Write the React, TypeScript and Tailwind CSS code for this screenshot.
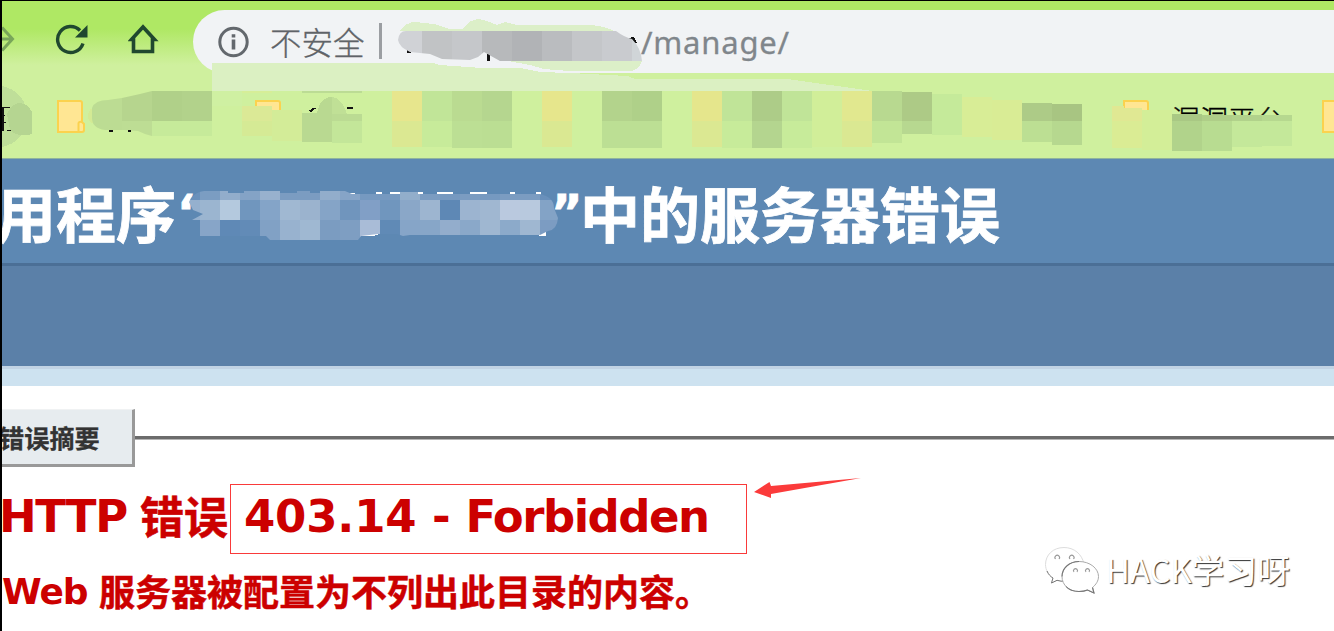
import React from "react";

type Block = [x: number, y: number, w: number, h: number, fill: string];

const bookmarkBlocks: Block[] = [
  [302, 91, 60, 2, "#bcdc94"],
  [242, 91, 30, 2, "#d6ee98"],
  [242, 106, 30, 15, "#dbe996"],
  [242, 121, 30, 15, "#d5ea95"],
  [272, 110, 30, 31, "#d3ec98"],
  [302, 113, 30, 29, "#b9d991"],
  [332, 114, 30, 7, "#bbdb93"],
  [332, 121, 30, 22, "#c3e699"],
  [392, 91, 30, 30, "#e7e68d"],
  [392, 121, 30, 26, "#dbe892"],
  [422, 91, 30, 30, "#c1e598"],
  [422, 121, 30, 26, "#c7eb9a"],
  [452, 91, 30, 30, "#badb91"],
  [452, 121, 30, 27, "#bcdf94"],
  [482, 91, 30, 30, "#b5d68f"],
  [482, 121, 30, 27, "#bbde93"],
  [542, 91, 30, 30, "#e6e68c"],
  [542, 121, 30, 26, "#dae892"],
  [602, 91, 30, 30, "#b3d38c"],
  [632, 91, 30, 30, "#afd089"],
  [602, 121, 60, 27, "#bcdf94"],
  [692, 91, 30, 30, "#e5e68c"],
  [692, 121, 30, 26, "#dbe892"],
  [722, 91, 30, 30, "#c0e498"],
  [722, 121, 30, 27, "#c7eb9a"],
  [752, 91, 30, 30, "#adcc88"],
  [752, 121, 30, 27, "#b4d58f"],
  [782, 91, 30, 30, "#c0e498"],
  [782, 121, 30, 27, "#c7eb9a"],
  [812, 91, 30, 56, "#d1ee99"],
  [842, 91, 30, 30, "#e1e88f"],
  [842, 121, 30, 26, "#dae892"],
  [872, 91, 30, 30, "#b8d990"],
  [872, 121, 30, 22, "#c2e596"],
  [902, 92, 30, 29, "#adca86"],
  [902, 121, 30, 13, "#b7d890"],
  [932, 94, 30, 41, "#c5ea9a"],
  [962, 97, 30, 40, "#d8ed96"],
  [992, 100, 30, 40, "#d9ec95"],
  [1022, 103, 30, 18, "#adcb87"],
  [1022, 121, 30, 21, "#bcdf93"],
  [1052, 104, 30, 17, "#a8c582"],
  [1052, 121, 30, 24, "#b6d88f"],
  [1112, 106, 12, 15, "#e0e893"],
  [1124, 108, 18, 13, "#e0e893"],
  [1112, 121, 30, 27, "#daec94"],
  [1142, 110, 30, 40, "#d3ee98"],
  [1172, 114, 30, 7, "#a9c884"],
  [1172, 121, 30, 30, "#b1d38b"],
  [1202, 115, 30, 6, "#afce88"],
  [1202, 121, 30, 30, "#b8dc91"],
  [1232, 115, 30, 6, "#b1d28b"],
  [1232, 121, 30, 26, "#c4e89a"],
  [1262, 115, 30, 6, "#b6d88f"],
  [1262, 121, 30, 25, "#c4e89a"],
];

const smudgeBlocks: Block[] = [
  [88, 90, 34, 50, "#bcdc93"],
  [122, 90, 30, 31, "#b6d58e"],
  [152, 90, 30, 31, "#b0d089"],
  [182, 90, 30, 31, "#b2d28b"],
  [122, 121, 30, 20, "#bddd94"],
  [152, 121, 60, 20, "#c6ea9a"],
];

const urlBlocks: Block[] = [
  [396, 31, 26, 30, "#d0d2d6"],
  [422, 31, 30, 30, "#c1c3c5"],
  [452, 31, 30, 30, "#c5c7ca"],
  [482, 31, 30, 30, "#b7b9bb"],
  [512, 31, 30, 30, "#b1b3b6"],
  [542, 31, 30, 30, "#babcbf"],
  [572, 31, 30, 30, "#c4c6c9"],
  [602, 31, 30, 30, "#c9cbcf"],
  [632, 31, 12, 30, "#d0d5d8"],
];

const titleRows: { y: number; h: number; colors: string[] }[] = [
  {
    y: 190,
    h: 10,
    colors: ["#6990bb", "#7b9dc2", "#92adcb", "#84a3c6", "#98b1ce", "#7b9cc1", "#7b9cc1", "#92adcb", "#86a4c7", "#7699c0", "#7699c0", "#92aecb", "#7b9cc1", "#7699c0", "#7b9cc1", "#7699c0", "#7b9cc1", "#7b9cc1", "#6990bb"],
  },
  {
    y: 200,
    h: 20,
    colors: ["#95b0ce", "#9bb5d0", "#b4c9de", "#7096be", "#84a4c8", "#a0b8d2", "#9bb3ce", "#85a4c7", "#7095bd", "#819fc6", "#7096be", "#8aa7c8", "#9db5d0", "#5e88b5", "#9cb4d0", "#a0b7d1", "#bac9df", "#b8c9de", "#83a3c6"],
  },
  {
    y: 220,
    h: 20,
    colors: ["#5d88b3", "#87a5c8", "#5f89b6", "#628bb7", "#81a1c5", "#98b2cf", "#9fb8d2", "#7b9cc1", "#7e9ec2", "#a9bcd7", "#608ab6", "#86a5c8", "#87a6c8", "#93adcc", "#8aa8c9", "#9fb7d1", "#8caaca", "#9fb7d1", "#7c9cc2"],
  },
];

function Blocks({ items }: { items: Block[] }) {
  return (
    <>
      {items.map(([x, y, w, h, fill]) => (
        <rect key={`${x}-${y}`} x={x} y={y} width={w} height={h} fill={fill} />
      ))}
    </>
  );
}

function HeaderMosaic() {
  return (
    <svg className="pointer-events-none absolute top-0 left-0" width="1334" height="158" viewBox="0 0 1334 158" shapeRendering="crispEdges">
      <defs>
        <clipPath id="url-clip">
          <path d="M398 40 Q399 31 406 31 H616 Q624 37 632 39 Q641 48 642 61 H500 L491 56 L484 52 L478 57 L470 60 L442 59 L430 54 L410 52 Q399 47 398 40Z" />
        </clipPath>
        <clipPath id="smudge-clip">
          <path d="M92 108 Q95 100 108 100 L122 98 L140 94 L152 91 H212 V136 H152 L145 134 L138 131 L124 130 H105 Q92 128 92 118Z" />
        </clipPath>
      </defs>
      <path d="M212 63 H433 L440 65 L482 68 H520 L540 72 L570 73 L628 76 L635 79 H787 L830 85 L873 91 L590 91 H242 V106 H209 L212 100Z" fill="#dbf0c2" />
      <rect x="208" y="91" width="34" height="15" fill="#cff0a2" />
      <path d="M400 31 Q406 22 415 22 L434 24 L450 29 L463 29 Q470 19 479 19 L487 21 L497 25 L505 22 L517 25 H592 Q608 27 618 33Z" fill="#dcefc8" />
      <path d="M508 61 H642 Q639 71 629 71 H569 L544 69 L530 65Z" fill="#dcefc8" />
      <g fill="#111">
        <path d="M627 38 L634 37 L637 43 L630 42Z" />
        <rect x="407" y="50" width="4" height="3" />
        <rect x="480" y="51" width="2" height="2" />
        <rect x="487" y="54" width="3" height="7" />
      </g>
      <g clipPath="url(#url-clip)">
        <Blocks items={urlBlocks} />
      </g>
      <path d="M2 86 A31 31 0 0 1 2 147Z" fill="#bfdf99" />
      <path d="M7 114 Q12 103 20 103 Q28 104 32 112 V134 Q18 138 10 130Z" fill="#b5d591" />
      <path d="M2 107.500h8M2 115.500h3M2 122.500h4M7 130.500h4" stroke="#111" strokeWidth="1.500" />
      <path d="M3 108V131" stroke="#111" strokeWidth="1.500" />
      <ellipse cx="92" cy="116" rx="4" ry="7" fill="#d3ea94" />
      <g clipPath="url(#smudge-clip)">
        <Blocks items={smudgeBlocks} />
      </g>
      <path d="M109 131h4M128 131h3M347 108h6" stroke="#111" strokeWidth="2" />
      <path d="M308 111 L314 107.500 H317 L311 112Z" fill="#111" />
      <path d="M317 113 Q320 97 332 97 V114Z" fill="#b9d991" />
      <path d="M332 97 Q342 98 347 114 H332Z" fill="#c0e096" />
      <Blocks items={bookmarkBlocks} />
    </svg>
  );
}

function TitleMosaic() {
  return (
    <svg className="pointer-events-none absolute top-[159px] left-0" width="600" height="100" viewBox="0 159 600 100" shapeRendering="crispEdges">
      <defs>
        <clipPath id="title-clip">
          <path d="M191 198 Q196 192 204 191 H228 V193 H244 V191 H280 V193 H297 V191 H310 V193 H320 V191 H345 L352 194 H365 L370 194 H400 V192 H418 V194 H540 Q554 197 554 208 L558 218 Q557 230 548 231 L540 235 H410 L403 236 L397 234 H378 L361 236 L358 240 H270 L266 236 H200 V220 H192 L203 214 L193 210 L189 202Z" />
        </clipPath>
      </defs>
      <path d="M332 193H355V195H332ZM376 192H382V195H376ZM390 192H423V194H390ZM437 192H453V194H437ZM470 192H487V194H470ZM510 192H515V195H510ZM536 192H541V195H536Z" fill="#fff" />
      <path d="M361 234 H380 L373 236 H361ZM539 235 L546 231 V236 H539Z" fill="#fff" />
      <g clipPath="url(#title-clip)">
        {titleRows.map(({ y, h, colors }) =>
          colors.map((fill, i) => <rect key={`${y}-${i}`} x={180 + i * 20} y={y} width={20} height={h} fill={fill} />),
        )}
      </g>
    </svg>
  );
}

function Folder({ className }: { className: string }) {
  return (
    <svg className={className} width="28" height="33" viewBox="0 0 28 33">
      <path d="M1 1H23Q25 1 25 3V22L27 24V30Q27 32 25 32H1Z" fill="#ffe693" stroke="#fbd24e" strokeWidth="2" />
      <path d="M21.500 32V23Q22 21.500 25 22" fill="none" stroke="#fbd24e" strokeWidth="2" />
    </svg>
  );
}

function Toolbar() {
  return (
    <div className="flex h-[72px] items-start pt-[9px]">
      <svg className="mt-[14px] shrink-0" width="13" height="30" viewBox="0 0 13 30">
        <path d="M0 15H10M0 3.500L10.500 15L0 26.500" fill="none" stroke="#79a65a" strokeWidth="3" />
      </svg>
      <svg className="mt-[13px] ml-[40px] shrink-0" width="36" height="34" viewBox="0 0 36 34">
        <path d="M28 20.500A13 13 0 1 1 25 7.500" fill="none" stroke="#20482f" strokeWidth="3.400" />
        <path d="M32.500 2V14.500H20Z" fill="#20482f" />
      </svg>
      <svg className="mt-[14px] ml-[37px] shrink-0" width="32" height="32" viewBox="0 0 32 32">
        <path d="M3.500 15.500L15 3L26.500 15.500H24.500V27.500H5.500V15.500Z" fill="none" stroke="#20482f" strokeWidth="3.600" />
      </svg>
      <div className="ml-[33px] flex h-[63px] flex-1 items-start rounded-l-full bg-[#f1f3f5]">
        <svg className="mt-4 ml-[25px] shrink-0" width="32" height="32" viewBox="0 0 32 32">
          <circle cx="15.500" cy="16" r="13.700" fill="none" stroke="#63686d" strokeWidth="3" />
          <path d="M15.500 13.500V23.500M15.500 8.200V11.500" stroke="#63686d" strokeWidth="3.600" />
        </svg>
        <span className="mt-[15px] ml-[20px] w-[96px] shrink-0 whitespace-nowrap font-['Noto_Sans_CJK_SC',sans-serif] text-[31.500px] leading-[32px] font-light text-[#5f6368] [-webkit-text-stroke:0.3px_#5f6368]">不安全</span>
        <span className="mt-[13px] ml-[13px] h-9 w-[3px] shrink-0 bg-[#9b9ea2]" />
        <span className="mt-[12px] ml-[259px] whitespace-nowrap font-['Noto_Sans',sans-serif] text-[31px] leading-[40px] tracking-[0.800px] text-[#80868b] [-webkit-text-stroke:0.3px_#80868b]">/manage/</span>
      </div>
    </div>
  );
}

function Bookmarks() {
  return (
    <div className="flex items-start pt-[27px]">
      <Folder className="ml-[55px] shrink-0" />
      <Folder className="ml-[170px] shrink-0" />
      <Folder className="ml-[840px] shrink-0" />
      <span className="mt-[3px] ml-[21px] w-[116px] shrink-0 whitespace-nowrap font-['Noto_Sans_CJK_SC',sans-serif] text-[28px] leading-[32px] font-light text-black [-webkit-text-stroke:0.4px_#000]">漏洞平台</span>
      <Folder className="ml-[34px] shrink-0" />
    </div>
  );
}

function Annotation() {
  return (
    <>
      <div className="absolute top-[484px] left-[230px] h-[70px] w-[517px] border border-[#f93a3a]" />
      <svg className="absolute top-[474px] left-[750px]" width="114" height="28" viewBox="750 474 114 28">
        <path d="M754 492L769.500 482L771 486L861 478L771 494V498Z" fill="#fb3b3b" />
      </svg>
    </>
  );
}

function Watermark() {
  return (
    <div className="absolute top-[544px] left-[1044px] flex items-start">
      <svg width="60" height="52" viewBox="0 0 60 52">
        <g fill="#fff" strokeWidth="1">
          <path d="M20 3.500C9 3.500 1.500 11 1.500 20.500C1.500 26 4.500 31 9 34L7.500 39L13 36.300Q17 37.500 22 37.200L40 20C38 10 30 3.500 20 3.500Z" stroke="#ddd" />
          <path d="M3 27C4.500 30.500 6.500 32.500 9 34L7.500 39L13 36.300Q17 37.500 21 37.200" stroke="#777" />
          <path d="M35 17.500C25 17.500 18 24.500 18 32.500C18 41 25 47.500 35 47.500Q40 47.500 43.500 46L50 49L48.500 43.500C52 40.500 54.500 37 54.500 32.500C54.500 24.500 46 17.500 35 17.500Z" stroke="#aaa" />
        </g>
        <g fill="none" stroke="#777" strokeWidth="1.100">
          <path d="M18 32.500C18 24.500 25 17.500 35 17.500M22 42.500C25 46 30 47.500 35 47.500Q40 47.500 43.500 46L50 49L48.500 43.500" />
          <path d="M11.500 15a2.300 2.300 0 1 1 3.500 0M26 15a2.300 2.300 0 1 1 3.500 0M30 28a2 2 0 1 1 3 0M42 28a2 2 0 1 1 3 0" stroke="#999" />
        </g>
      </svg>
      <span className="mt-[5px] ml-[2px] whitespace-nowrap font-['Noto_Sans_CJK_SC',sans-serif] text-[32.800px] leading-[40px] text-white [text-shadow:1px_1px_1px_#333]">HACK学习呀</span>
    </div>
  );
}

export default function App() {
  return (
    <div className="relative h-[631px] w-[1334px] overflow-hidden border-t border-l-2 border-black bg-white">
      <div className="h-[157px] bg-[linear-gradient(to_bottom,#afe864_0px,#afe864_28px,#cff09e_64px,#cff09e_157px)]">
        <Toolbar />
        <Bookmarks />
      </div>

      <div className="flex h-[108px] items-start border-t border-b-[3px] border-t-[#8fb39e] border-b-[#4b6f96] bg-[#5d88b3] pt-[18px] whitespace-nowrap text-white [-webkit-text-stroke:0.8px_#fff]">
        <span className="ml-[-6px] w-[181px] shrink-0 font-['Noto_Sans_CJK_SC',sans-serif] text-[60px] leading-[70px] font-bold">用程序</span>
        <span className="w-[374px] shrink-0 font-['DejaVu_Sans',sans-serif] text-[48px] leading-[70px] font-bold">‘</span>
        <span className="w-[29px] shrink-0 font-['DejaVu_Sans',sans-serif] text-[48px] leading-[70px] font-bold">”</span>
        <span className="shrink-0 font-['Noto_Sans_CJK_SC',sans-serif] text-[60px] leading-[70px] font-bold">中的服务器错误</span>
      </div>
      <div className="h-[100px] bg-[#5b80a8]" />
      <div className="h-[20px] border-t-[3px] border-[#c1d3e4] bg-[#cde2f0]" />

      <div className="mt-[23px] flex h-[58px] items-center">
        <div className="flex h-full w-[133px] items-center border-t border-r-[3px] border-b-[3px] border-t-[#f0f2f3] border-r-[#999] border-b-[#999] bg-[#e7ecef]">
          <h2 className="ml-[-3px] whitespace-nowrap font-['Noto_Sans_CJK_SC',sans-serif] text-[25.200px] leading-[32px] font-bold text-[#333] [-webkit-text-stroke:0.3px_#333]">错误摘要</h2>
        </div>
        <div className="h-[4px] flex-1 border-b border-[#b5b5b5] bg-[#6c6c6c]" />
      </div>

      <h1 className="mt-[20px] flex h-[60px] items-center whitespace-nowrap font-['DejaVu_Sans','Noto_Sans_CJK_SC',sans-serif] text-[45px] leading-[60px] font-bold text-[#cc0000]">
        <span className="ml-[-3px] w-[141px] shrink-0 tracking-[-1.300px]">HTTP</span>
        <span className="mt-[-4px] w-[104px] shrink-0 font-['Noto_Sans_CJK_SC',sans-serif] text-[44px] [-webkit-text-stroke:0.5px_#c00]">错误</span>
        <span className="tracking-[-0.200px]">403.14 - </span>
        <span className="ml-[15px] tracking-[-1.500px]">Forbidden</span>
      </h1>
      <h3 className="mt-[20px] flex h-[50px] items-center whitespace-nowrap font-['DejaVu_Sans','Noto_Sans_CJK_SC',sans-serif] text-[36px] leading-[50px] font-bold text-[#cc0000]">
        <span className="w-[97px] shrink-0 tracking-[-1px]">Web</span>
        <span className="mt-[-4px] font-['Noto_Sans_CJK_SC',sans-serif] [-webkit-text-stroke:0.5px_#c00]">服务器被配置为不列出此目录的内容。</span>
      </h3>

      <div className="pointer-events-none absolute -top-px -left-[2px] h-[631px] w-[1334px]">
        <HeaderMosaic />
        <TitleMosaic />
        <Annotation />
        <Watermark />
        <div className="absolute top-0 left-0 h-full w-[2px] bg-black" />
      </div>
    </div>
  );
}
